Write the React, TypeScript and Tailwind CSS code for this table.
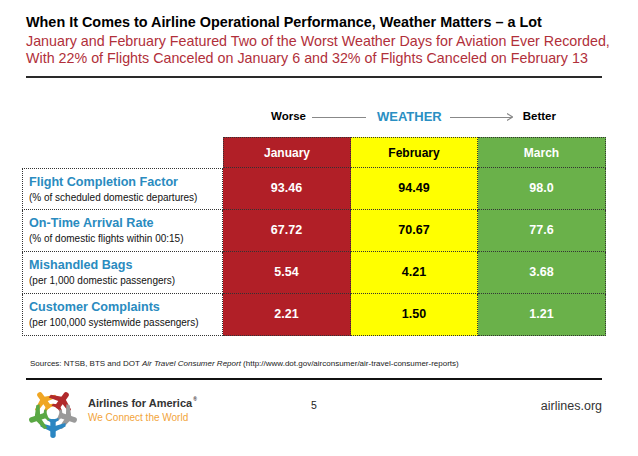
import React from "react";

const rows = [
  { t: "Flight Completion Factor", s: "(% of scheduled domestic departures)", v: ["93.46", "94.49", "98.0"] },
  { t: "On-Time Arrival Rate", s: "(% of domestic flights within 00:15)", v: ["67.72", "70.67", "77.6"] },
  { t: "Mishandled Bags", s: "(per 1,000 domestic passengers)", v: ["5.54", "4.21", "3.68"] },
  { t: "Customer Complaints", s: "(per 100,000 systemwide passengers)", v: ["2.21", "1.50", "1.21"] },
];

const colBg = ["bg-[#b11f27] text-white", "bg-[#ffff00] text-black", "bg-[#6ab14a] text-white"];

function Plane({ angle, color }: { angle: number; color: string }) {
  return (
    <g transform={`rotate(${angle} 27 26)`}>
      <g fill={color}>
        <rect x="24.3" y="1" width="5.4" height="19" rx="2.7" />
        <path d="M27 6.5 L39.5 12.5 L39.5 16 L27 12.5 L14.5 16 L14.5 12.5 Z" />
        <path d="M27 15.5 L32.5 18.5 L32.5 21 L27 19.5 L21.5 21 L21.5 18.5 Z" />
      </g>
    </g>
  );
}

function Logo() {
  return (
    <svg width="54" height="52" viewBox="0 0 54 52">
      <Plane angle={-36} color="#f0a623" />
      <Plane angle={36} color="#b12a2c" />
      <Plane angle={108} color="#9a9a9a" />
      <Plane angle={180} color="#2a86c2" />
      <Plane angle={-108} color="#5aa844" />
    </svg>
  );
}

export default function App() {
  return (
    <div className="w-[638px] h-[456px] bg-white font-['Liberation_Sans',Arial,sans-serif] text-black overflow-hidden">
      <div className="pt-[14px] pl-[26px]">
        <div className="text-[14.4px] font-bold leading-[17px]">
          When It Comes to Airline Operational Performance, Weather Matters – a Lot
        </div>
        <div className="text-[14.3px] leading-[16.5px] text-[#b12f3a] mt-[2px]">
          January and February Featured Two of the Worst Weather Days for Aviation Ever Recorded,
          <br />
          With 22% of Flights Canceled on January 6 and 32% of Flights Canceled on February 13
        </div>
      </div>
      <div className="ml-[26px] mt-[10px] w-[576px] h-[2px] bg-[#2a2a2a]" />

      <div className="ml-[271px] mt-[31px] flex items-center h-[16px] text-[11.5px] font-bold">
        <span>Worse</span>
        <div className="ml-[6px] w-[54px] h-[1px] bg-[#888]" />
        <span className="ml-[11px] text-[13px] text-[#2a8fc3]">WEATHER</span>
        <div className="ml-[8px] w-[62px] h-[1px] bg-[#888]" />
        <svg width="6" height="8" viewBox="0 0 6 8" className="-ml-[5px]">
          <path d="M0 0.5 L5.5 4 L0 7.5" fill="none" stroke="#888" strokeWidth="1.2" />
        </svg>
        <span className="ml-[10px]">Better</span>
      </div>

      <div className="ml-[22px] mt-[12px] grid grid-cols-[201px_128px_127px_128px]">
        <div />
        {["January", "February", "March"].map((m, i) => (
          <div
            key={m}
            className={`h-[31px] flex items-center justify-center text-[12px] font-bold border-t border-b border-r border-dotted border-[#333] ${i === 0 ? "border-l" : ""} ${colBg[i]}`}
          >
            {m}
          </div>
        ))}
        {rows.map((r, ri) => (
          <React.Fragment key={r.t}>
            <div
              className={`h-[42px] pl-[6px] flex flex-col justify-center border-l border-r border-b border-dotted border-[#333] ${ri === 0 ? "border-t" : ""}`}
            >
              <div className="text-[12.6px] font-bold text-[#2a8bc0] leading-[15px]">{r.t}</div>
              <div className="text-[10px] leading-[13px] text-[#111] mt-[1px]">{r.s}</div>
            </div>
            {r.v.map((v, i) => (
              <div
                key={i}
                className={`h-[42px] flex items-center justify-center text-[12.5px] font-bold border-b border-r border-dotted border-[#333] ${colBg[i]}`}
              >
                {v}
              </div>
            ))}
          </React.Fragment>
        ))}
      </div>

      <div className="ml-[30px] mt-[23px] text-[8px] leading-[10px] text-[#222]">
        Sources: NTSB, BTS and DOT <i>Air Travel Consumer Report</i> (http://www.dot.gov/airconsumer/air-travel-consumer-reports)
      </div>
      <div className="ml-[26px] mt-[9px] w-[576px] h-[2px] bg-[#111]" />

      <div className="ml-[26px] w-[576px] mt-[7px] grid grid-cols-[1fr_auto_1fr] items-start">
        <div className="flex items-start">
          <Logo />
          <div className="ml-[8px] mt-[10px]">
            <div className="text-[11px] font-bold text-[#333] leading-[13px]">
              Airlines for America<span className="text-[5px] leading-none align-top ml-[1px]">®</span>
            </div>
            <div className="text-[10px] text-[#f2a43a] leading-[16px]">We Connect the World</div>
          </div>
        </div>
        <div className="mt-[11px] text-[10.5px] text-[#222]">5</div>
        <div className="mt-[10px] text-right text-[12.5px] text-[#333]">airlines.org</div>
      </div>
    </div>
  );
}
